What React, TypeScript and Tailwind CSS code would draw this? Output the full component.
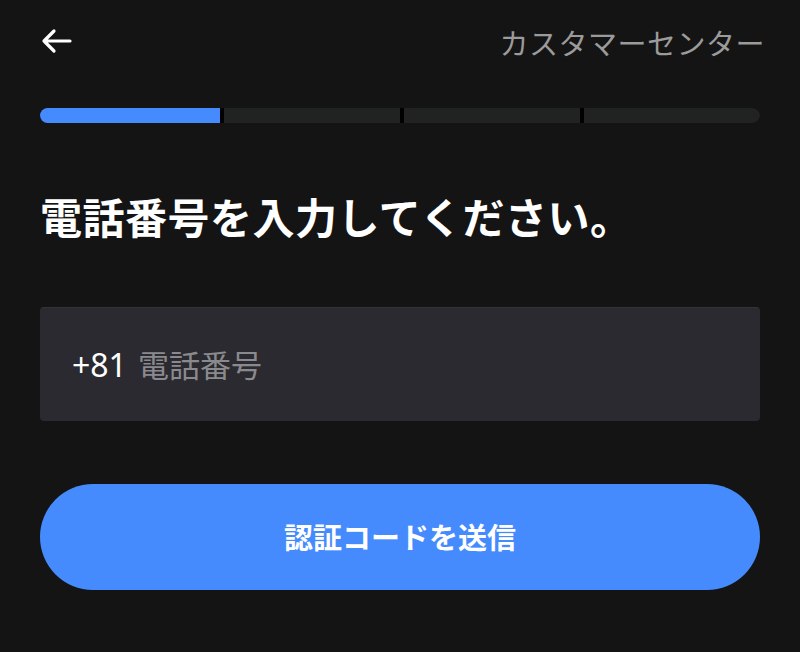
import React from "react";

export default function App() {
  const font = { fontFamily: '"Noto Sans CJK JP", "Noto Sans", sans-serif' };
  return (
    <div className="w-[800px] h-[652px] bg-[#141414] text-white overflow-hidden" style={font}>
      <div className="flex items-center justify-between pl-[40px] pr-[35px] pt-[22px] h-[62px]">
        <svg width="32" height="26" viewBox="0 0 32 26" fill="none" className="mt-[-2px]">
          <path d="M30 13H4M14 3L4 13l10 10" stroke="white" strokeWidth="3.2" strokeLinecap="round" strokeLinejoin="round" />
        </svg>
        <span className="text-[29px] leading-none text-[#9b9b9b] tracking-[0.5px]">カスタマーセンター</span>
      </div>

      <div className="mx-[40px] mt-[46px] h-[15px] rounded-full overflow-hidden flex gap-[4px] bg-black">
        <div className="w-[180px] bg-[#458bfd]" />
        <div className="flex-1 bg-[#212322]" />
        <div className="flex-1 bg-[#212322]" />
        <div className="flex-1 bg-[#212322]" />
      </div>

      <h1 className="mx-[40px] mt-[66px] text-[42px] font-bold leading-[54px] tracking-[0.5px]">
        電話番号を入力してください。
      </h1>

      <div className="mx-[40px] mt-[64px] h-[114px] bg-[#2a2a30] rounded-[4px] border-t border-[#333339] flex items-center pl-[32px] gap-[11px]">
        <span className="text-[32px] text-white" style={{ fontFamily: '"Noto Sans", sans-serif' }}>+81</span>
        <span className="text-[31px] text-[#8a8a8e]">電話番号</span>
      </div>

      <button className="mx-[40px] mt-[63px] w-[720px] h-[106px] rounded-full bg-[#458bfd] flex items-center justify-center text-[29px] font-bold text-white">
        認証コードを送信
      </button>
    </div>
  );
}
